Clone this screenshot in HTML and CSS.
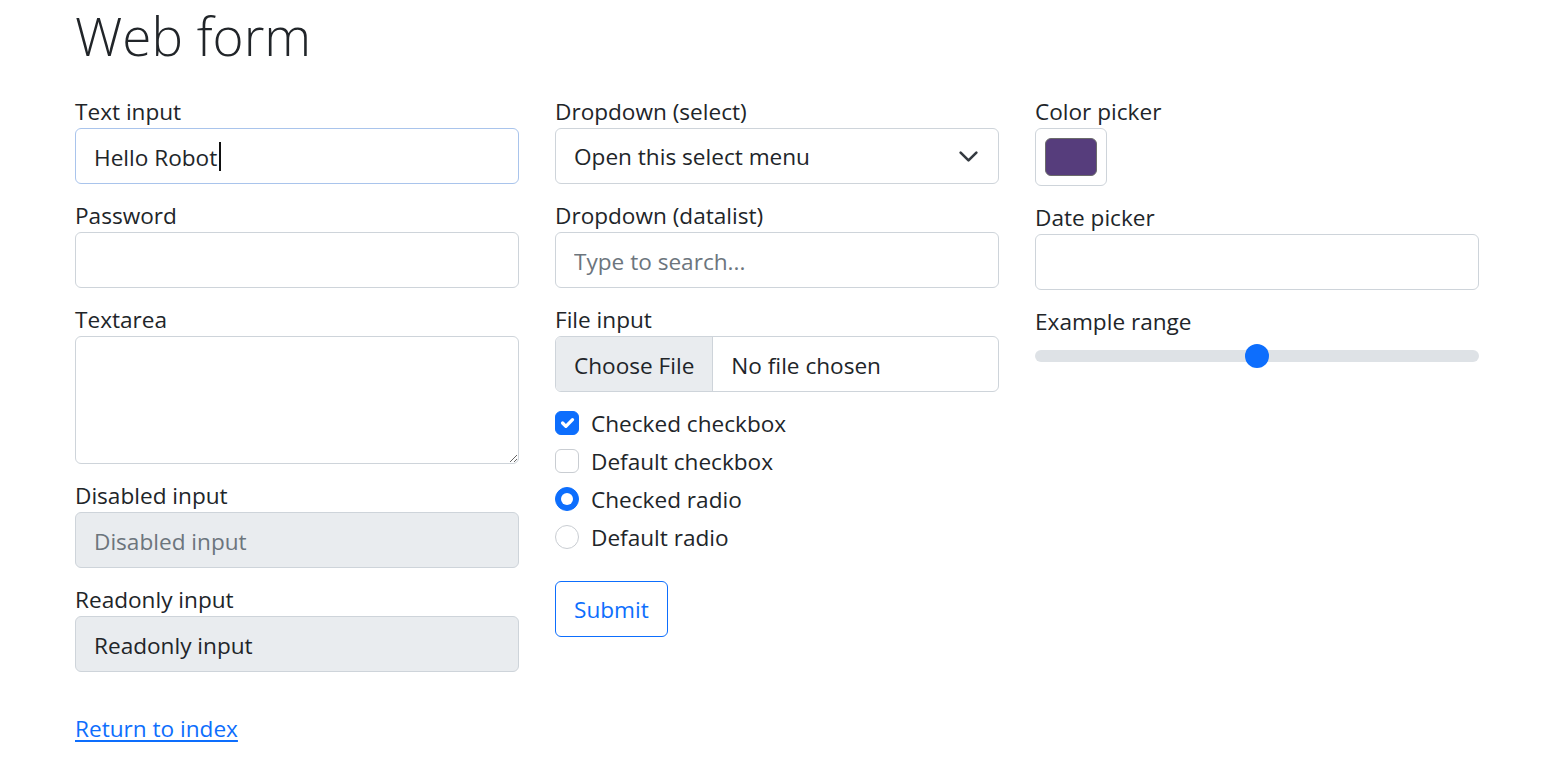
FILE: index.html
```html
<!DOCTYPE html>
<html lang="en">
<head>
<meta charset="utf-8">
<title>Web form</title>
<link rel="stylesheet" href="styles.css">
</head>
<body>
<div class="container">
  <h1 class="title">Web form</h1>
  <form class="form-grid" action="#" method="get">
    <div class="col">
      <label class="field">Text input
        <span class="caret-wrap">
          <input type="text" class="control control-focus" value="Hello Robot">
          <span class="caret"></span>
        </span>
      </label>
      <label class="field">Password
        <input type="password" class="control" autocomplete="off">
      </label>
      <label class="field">Textarea
        <textarea class="control textarea" rows="3"></textarea>
      </label>
      <label class="field">Disabled input
        <input type="text" class="control control-muted" placeholder="Disabled input" disabled>
      </label>
      <label class="field">Readonly input
        <input type="text" class="control control-muted" value="Readonly input" readonly>
      </label>
    </div>
    <div class="col">
      <label class="field">Dropdown (select)
        <span class="select-wrap">
          <select class="control select">
            <option selected>Open this select menu</option>
            <option value="1">One</option>
            <option value="2">Two</option>
            <option value="3">Three</option>
          </select>
          <svg class="chevron" viewBox="0 0 16 16" width="21" height="21" aria-hidden="true"><path fill="none" stroke="#343a40" stroke-linecap="round" stroke-linejoin="round" stroke-width="2" d="m2 5 6 6 6-6"/></svg>
        </span>
      </label>
      <label class="field">Dropdown (datalist)
        <input class="control" placeholder="Type to search...">
      </label>
      <label class="field">File input
        <input class="control file" type="file">
      </label>
      <div class="checks">
        <label class="check">
          <span class="box box-on"><svg viewBox="0 0 20 20" width="24" height="24" aria-hidden="true"><path fill="none" stroke="#fff" stroke-linecap="round" stroke-linejoin="round" stroke-width="3" d="M6 10l3 3l6-6"/></svg></span>
          Checked checkbox
        </label>
        <label class="check">
          <span class="box"></span>
          Default checkbox
        </label>
        <label class="check">
          <span class="box radio radio-on"><span class="dot"></span></span>
          Checked radio
        </label>
        <label class="check">
          <span class="box radio"></span>
          Default radio
        </label>
      </div>
      <button type="submit" class="btn">Submit</button>
    </div>
    <div class="col">
      <label class="field">Color picker
        <span class="color-box"><span class="swatch"></span></span>
      </label>
      <label class="field">Date picker
        <input type="text" class="control">
      </label>
      <label class="field">Example range
        <span class="range">
          <span class="track"></span>
          <span class="thumb"></span>
        </span>
      </label>
    </div>
  </form>
  <div class="footer">
    <a href="#" class="link">Return to index</a>
  </div>
</div>
</body>
</html>
```

FILE: styles.css
```css
* { box-sizing: border-box; }
html, body { margin: 0; padding: 0; background: #fff; }
body {
  font-family: "Open Sans", "Noto Sans", "Liberation Sans", sans-serif;
  font-size: 22.6px;
  line-height: 36px;
  color: #212529;
}
.container {
  width: 1440px;
  margin: 0 auto;
  padding: 0 18px;
}
.title {
  margin: 0 0 10px;
  padding-top: 2px;
  font-size: 53px;
  line-height: 68px;
  font-weight: 300;
}
.form-grid {
  display: grid;
  grid-template-columns: repeat(3, 444px);
  column-gap: 36px;
  padding: 12px 0;
  margin: 0;
}
.col { display: flex; flex-direction: column; align-items: flex-start; }
.field {
  display: block;
  width: 100%;
  margin-bottom: 12px;
  padding-top: 2px;
}
.field > .control,
.field > .caret-wrap,
.field > .select-wrap,
.field > .color-box,
.field > .range { margin-top: -2px; }
.control {
  display: block;
  width: 100%;
  height: 56px;
  padding: 10px 18px 8px;
  font: inherit;
  line-height: 36px;
  color: #212529;
  background: #fff;
  border: 1px solid #ced4da;
  border-radius: 6px;
  outline: none;
  appearance: none;
  -webkit-appearance: none;
}
.control::placeholder { color: #6c757d; opacity: 1; }
.control-focus { border-color: #a9c4ec; }
.control-muted { background: #e9ecef; }
.control-muted:disabled { color: #6c757d; }
.textarea { height: 128px; resize: vertical; }
.caret-wrap, .select-wrap { position: relative; display: block; }
.caret {
  position: absolute;
  left: 144px;
  top: 14px;
  width: 2px;
  height: 29px;
  background: #111;
}
.select { padding-right: 54px; cursor: pointer; }
.chevron {
  position: absolute;
  right: 20px;
  top: 18px;
  pointer-events: none;
}
.file { padding: 10px 18px 8px; overflow: hidden; }
.file::file-selector-button {
  font: inherit;
  color: #212529;
  background: #e9ecef;
  border: 0;
  border-right: 1px solid #ced4da;
  border-radius: 0;
  padding: 10px 18px 8px;
  margin: -10px 18px -8px -18px;
  height: 56px;
}
.checks { display: flex; flex-direction: column; gap: 2px; padding-top: 1px; }
.check {
  display: flex;
  align-items: center;
  gap: 12px;
  height: 36px;
  line-height: 34px;
  padding-top: 2px;
}
.box {
  flex: none;
  width: 24px;
  height: 24px;
  margin-top: -2px;
  border: 1px solid #c9cdd2;
  border-radius: 6px;
  background: #fff;
  display: flex;
  align-items: center;
  justify-content: center;
}
.box svg { display: block; }
.box-on { background: #0d6efd; border-color: #0d6efd; }
.radio { border-radius: 50%; }
.radio-on { background: #0d6efd; border-color: #0d6efd; }
.dot { width: 12px; height: 12px; border-radius: 50%; background: #fff; }
.btn {
  margin-top: 26px;
  height: 56px;
  padding: 10px 18px 8px;
  font: inherit;
  line-height: 36px;
  color: #0d6efd;
  background: #fff;
  border: 1px solid #0d6efd;
  border-radius: 6px;
  cursor: pointer;
}
.color-box {
  display: block;
  width: 72px;
  height: 58px;
  padding: 9px;
  border: 1px solid #ced4da;
  border-radius: 6px;
  background: #fff;
}
.swatch {
  display: block;
  width: 100%;
  height: 100%;
  background: #563d7c;
  border: 1px solid #6b6b6b;
  border-radius: 6px;
}
.range {
  position: relative;
  display: flex;
  align-items: center;
  height: 36px;
}
.track {
  display: block;
  width: 100%;
  height: 12px;
  border-radius: 6px;
  background: #dee2e6;
}
.thumb {
  position: absolute;
  left: 210px;
  top: 6px;
  width: 24px;
  height: 24px;
  border-radius: 50%;
  background: #0d6efd;
}
.footer { padding-top: 15px; }
.link { color: #0d6efd; text-decoration: underline; text-underline-offset: 3px; }
```
